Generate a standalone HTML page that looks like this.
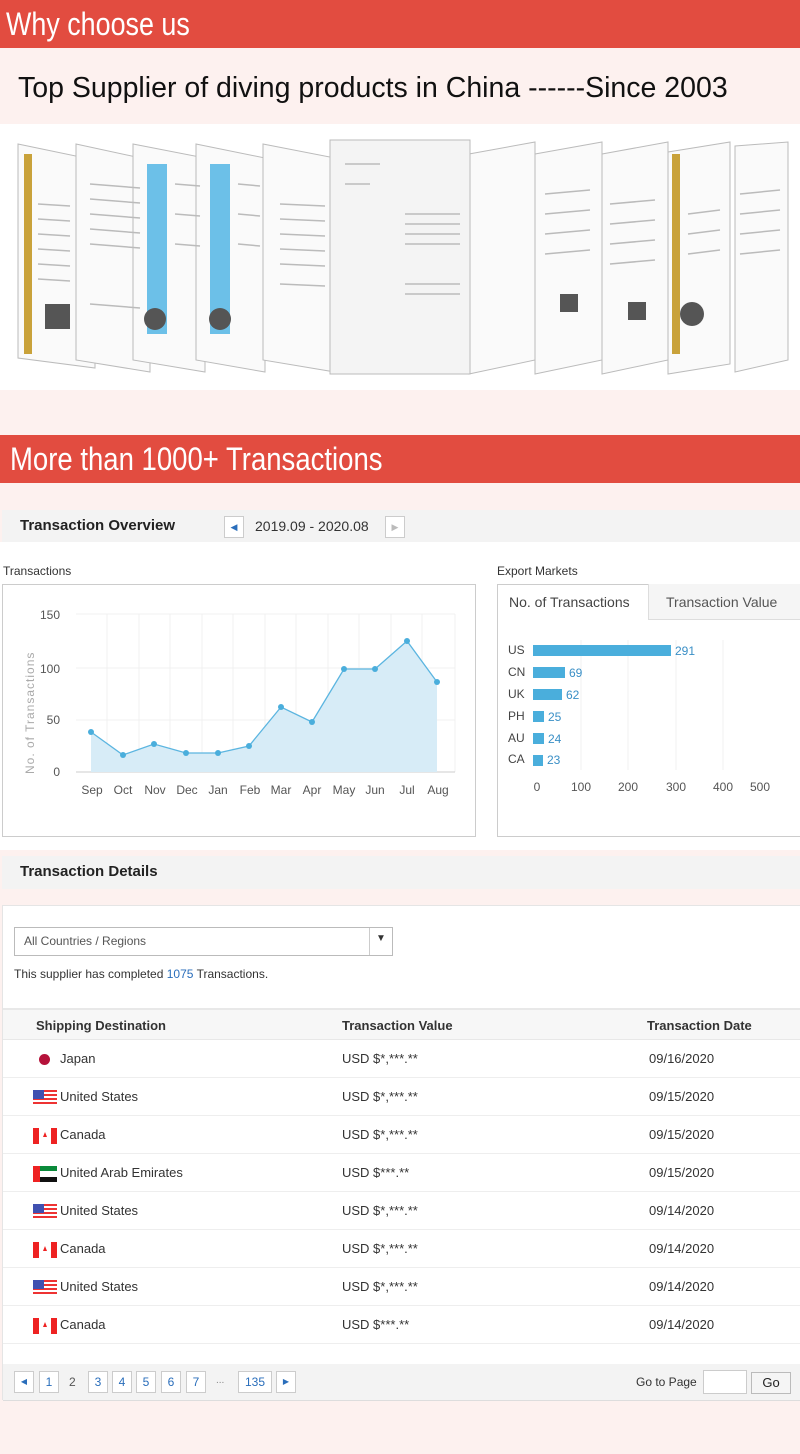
<!DOCTYPE html>
<html><head><meta charset="utf-8"><style>
*{margin:0;padding:0;box-sizing:border-box}
body{width:800px;height:1454px;background:#fdf1ef;font-family:"Liberation Sans",Arial,sans-serif;position:relative;overflow:hidden;color:#333}
.a{position:absolute}
.red{background:#e24c40;color:#fff;height:48px;width:800px}
.red div{position:absolute;top:4px;font-size:32px;line-height:40px;transform-origin:left center;white-space:nowrap}
.bx{border:1px solid #ccc;background:#fff}
.pg{position:absolute;top:1371px;height:22px;border:1px solid #ccc;background:#fff;color:#2a6ebb;font-size:12px;text-align:center;line-height:20px}
.row{position:absolute;left:3px;width:797px;height:38px;border-bottom:1px solid #eee;font-size:13px;color:#333}
.row span{position:absolute;top:11px}
.fl{position:absolute;left:30px;top:12px;width:24px;height:16px}
</style></head><body>
<div class="a red" style="top:0"><div style="left:6px;transform:scaleX(0.84)">Why choose us</div></div>
<div class="a" style="top:72px;left:18px;font-size:28.5px;color:#111">Top Supplier of diving products in China ------Since 2003</div>
<div class="a" style="top:124px;left:0;width:800px;height:266px;background:#fff"></div>
<svg class="a" style="top:124px;left:0" width="800" height="266">
<g stroke="#bbb" stroke-width="1" fill="#fafafa">
<polygon points="18,20 95,36 95,244 18,234"/>
<polygon points="76,20 150,36 150,248 76,236"/>
<polygon points="133,20 205,34 205,248 133,236"/>
<polygon points="196,20 265,34 265,248 196,236"/>
<polygon points="263,20 335,34 335,248 263,236"/>
<polygon points="735,22 788,18 788,236 735,248"/>
<polygon points="668,28 730,18 730,240 668,250"/>
<polygon points="602,30 668,18 668,236 602,250"/>
<polygon points="535,30 602,18 602,236 535,250"/>
<polygon points="469,30 535,18 535,236 469,250"/>
<polygon points="330,16 470,16 470,250 330,250" fill="#f4f4f4"/>
</g>
<rect x="147" y="40" width="20" height="170" fill="#6cc0e8"/>
<rect x="210" y="40" width="20" height="170" fill="#6cc0e8"/>
<g fill="#c9a23a"><rect x="24" y="30" width="8" height="200"/><rect x="672" y="30" width="8" height="200"/></g>
<g fill="#555"><rect x="45" y="180" width="25" height="25"/><rect x="560" y="170" width="18" height="18"/><rect x="628" y="178" width="18" height="18"/><circle cx="155" cy="195" r="11"/><circle cx="220" cy="195" r="11"/><circle cx="692" cy="190" r="12"/></g>
<g stroke="#bbb" stroke-width="1.5">
<line x1="38" y1="80" x2="70" y2="82"/><line x1="38" y1="95" x2="70" y2="97"/><line x1="38" y1="110" x2="70" y2="112"/><line x1="38" y1="125" x2="70" y2="127"/><line x1="38" y1="140" x2="70" y2="142"/><line x1="38" y1="155" x2="70" y2="157"/>
<line x1="90" y1="60" x2="140" y2="64"/><line x1="90" y1="75" x2="140" y2="79"/><line x1="90" y1="90" x2="140" y2="94"/><line x1="90" y1="105" x2="140" y2="109"/><line x1="90" y1="120" x2="140" y2="124"/><line x1="90" y1="180" x2="140" y2="184"/>
<line x1="175" y1="60" x2="200" y2="62"/><line x1="175" y1="90" x2="200" y2="92"/><line x1="175" y1="120" x2="200" y2="122"/><line x1="238" y1="60" x2="260" y2="62"/><line x1="238" y1="90" x2="260" y2="92"/><line x1="238" y1="120" x2="260" y2="122"/>
<line x1="280" y1="80" x2="325" y2="82"/><line x1="280" y1="95" x2="325" y2="97"/><line x1="280" y1="110" x2="325" y2="112"/><line x1="280" y1="125" x2="325" y2="127"/><line x1="280" y1="140" x2="325" y2="142"/><line x1="280" y1="160" x2="325" y2="162"/>
<line x1="405" y1="90" x2="460" y2="90"/><line x1="405" y1="100" x2="460" y2="100"/><line x1="405" y1="110" x2="460" y2="110"/><line x1="405" y1="120" x2="460" y2="120"/><line x1="405" y1="160" x2="460" y2="160"/><line x1="405" y1="170" x2="460" y2="170"/><line x1="345" y1="40" x2="380" y2="40"/><line x1="345" y1="60" x2="370" y2="60"/>
<line x1="545" y1="70" x2="590" y2="66"/><line x1="545" y1="90" x2="590" y2="86"/><line x1="545" y1="110" x2="590" y2="106"/><line x1="545" y1="130" x2="590" y2="126"/>
<line x1="610" y1="80" x2="655" y2="76"/><line x1="610" y1="100" x2="655" y2="96"/><line x1="610" y1="120" x2="655" y2="116"/><line x1="610" y1="140" x2="655" y2="136"/>
<line x1="688" y1="90" x2="720" y2="86"/><line x1="688" y1="110" x2="720" y2="106"/><line x1="688" y1="130" x2="720" y2="126"/>
<line x1="740" y1="70" x2="780" y2="66"/><line x1="740" y1="90" x2="780" y2="86"/><line x1="740" y1="110" x2="780" y2="106"/><line x1="740" y1="130" x2="780" y2="126"/></g>
</svg>
<div class="a red" style="top:435px"><div style="left:10px;transform:scaleX(0.86)">More than 1000+ Transactions</div></div>
<div class="a" style="top:510px;left:2px;width:798px;height:32px;background:#f3f3f3"></div>
<div class="a" style="top:517px;left:20px;font-size:15px;font-weight:bold;color:#222">Transaction Overview</div>
<div class="a" style="top:516px;left:224px;width:20px;height:22px;border:1px solid #ccc;background:#fff;color:#2a6ebb;font-size:9px;text-align:center;line-height:20px">◀</div>
<div class="a" style="top:518px;left:255px;font-size:14px;color:#333">2019.09 - 2020.08</div>
<div class="a" style="top:516px;left:385px;width:20px;height:22px;border:1px solid #ccc;background:#fff;color:#bbb;font-size:9px;text-align:center;line-height:20px">▶</div>
<div class="a" style="top:542px;left:0;width:800px;height:308px;background:#fff"></div>
<div class="a" style="top:564px;left:3px;font-size:12px">Transactions</div>
<div class="a" style="top:564px;left:497px;font-size:12px">Export Markets</div>
<div class="a bx" style="top:584px;left:2px;width:474px;height:253px"></div>
<div class="a bx" style="top:584px;left:497px;width:310px;height:253px"></div>
<svg class="a" style="top:584px;left:2px" width="474" height="253" font-family="Liberation Sans,sans-serif">
<g stroke="#f0f0f0"><line x1="74" y1="30" x2="453" y2="30"/><line x1="74" y1="84" x2="453" y2="84"/><line x1="74" y1="136" x2="453" y2="136"/>
<line x1="105" y1="30" x2="105" y2="188"/><line x1="137" y1="30" x2="137" y2="188"/><line x1="168" y1="30" x2="168" y2="188"/><line x1="200" y1="30" x2="200" y2="188"/><line x1="231" y1="30" x2="231" y2="188"/><line x1="263" y1="30" x2="263" y2="188"/><line x1="294" y1="30" x2="294" y2="188"/><line x1="326" y1="30" x2="326" y2="188"/><line x1="357" y1="30" x2="357" y2="188"/><line x1="389" y1="30" x2="389" y2="188"/><line x1="420" y1="30" x2="420" y2="188"/><line x1="453" y1="30" x2="453" y2="188"/></g>
<line x1="74" y1="188" x2="453" y2="188" stroke="#ccc"/>
<polygon fill="#d7ecf7" points="89,188 89,148 121,171 152,160 184,169 216,169 247,162 279,123 310,138 342,85 373,85 405,57 435,98 435,188"/>
<polyline fill="none" stroke="#5bb5e0" stroke-width="1.3" points="89,148 121,171 152,160 184,169 216,169 247,162 279,123 310,138 342,85 373,85 405,57 435,98"/>
<g fill="#4aaedc"><circle cx="89" cy="148" r="3"/><circle cx="121" cy="171" r="3"/><circle cx="152" cy="160" r="3"/><circle cx="184" cy="169" r="3"/><circle cx="216" cy="169" r="3"/><circle cx="247" cy="162" r="3"/><circle cx="279" cy="123" r="3"/><circle cx="310" cy="138" r="3"/><circle cx="342" cy="85" r="3"/><circle cx="373" cy="85" r="3"/><circle cx="405" cy="57" r="3"/><circle cx="435" cy="98" r="3"/></g>
<g font-size="12" fill="#555" text-anchor="end"><text x="58" y="35">150</text><text x="58" y="89">100</text><text x="58" y="140">50</text><text x="58" y="192">0</text></g>
<text transform="translate(32,190) rotate(-90)" font-size="12" fill="#aaa" letter-spacing="1">No. of Transactions</text>
<g font-size="12" fill="#555" text-anchor="middle"><text x="90" y="210">Sep</text><text x="121" y="210">Oct</text><text x="153" y="210">Nov</text><text x="185" y="210">Dec</text><text x="216" y="210">Jan</text><text x="248" y="210">Feb</text><text x="279" y="210">Mar</text><text x="310" y="210">Apr</text><text x="342" y="210">May</text><text x="373" y="210">Jun</text><text x="405" y="210">Jul</text><text x="436" y="210">Aug</text></g>
</svg>
<div class="a" style="top:584px;left:648px;width:152px;height:36px;background:#f5f5f5;border-left:1px solid #ddd;border-bottom:1px solid #ddd"></div>
<div class="a" style="top:594px;left:509px;font-size:14px;color:#444">No. of Transactions</div>
<div class="a" style="top:594px;left:666px;font-size:14px;color:#555">Transaction Value</div>
<svg class="a" style="top:620px;left:497px" width="303" height="216" font-family="Liberation Sans,sans-serif">
<g stroke="#f2f2f2"><line x1="84" y1="20" x2="84" y2="150"/><line x1="131" y1="20" x2="131" y2="150"/><line x1="179" y1="20" x2="179" y2="150"/><line x1="226" y1="20" x2="226" y2="150"/></g>
<g fill="#4aaedc"><rect x="36" y="25" width="138" height="11"/><rect x="36" y="47" width="32" height="11"/><rect x="36" y="69" width="29" height="11"/><rect x="36" y="91" width="11" height="11"/><rect x="36" y="113" width="11" height="11"/><rect x="36" y="135" width="10" height="11"/></g>
<g font-size="12" fill="#444"><text x="11" y="34">US</text><text x="11" y="56">CN</text><text x="11" y="78">UK</text><text x="11" y="100">PH</text><text x="11" y="122">AU</text><text x="11" y="143">CA</text></g>
<g font-size="12" fill="#3a8fc6"><text x="178" y="35">291</text><text x="72" y="57">69</text><text x="69" y="79">62</text><text x="51" y="101">25</text><text x="51" y="123">24</text><text x="50" y="144">23</text></g>
<g font-size="12" fill="#555" text-anchor="middle"><text x="40" y="171">0</text><text x="84" y="171">100</text><text x="131" y="171">200</text><text x="179" y="171">300</text><text x="226" y="171">400</text><text x="263" y="171">500</text></g>
</svg>
<div class="a" style="top:856px;left:2px;width:798px;height:33px;background:#f3f3f3"></div>
<div class="a" style="top:863px;left:20px;font-size:15px;font-weight:bold;color:#222">Transaction Details</div>
<div class="a" style="top:905px;left:2px;width:800px;height:495px;background:#fff;border:1px solid #e5e5e5"></div>
<div class="a" style="top:927px;left:14px;width:379px;height:29px;border:1px solid #bbb;background:#fff;font-size:12px;color:#555;line-height:27px;padding-left:9px">All Countries / Regions</div>
<div class="a" style="top:928px;left:369px;width:1px;height:27px;background:#ccc"></div>
<div class="a" style="top:933px;left:376px;font-size:10px;color:#333">▼</div>
<div class="a" style="top:967px;left:14px;font-size:12px;color:#333">This supplier has completed <span style="color:#2a6ebb">1075</span> Transactions.</div>
<div class="a" style="top:1008px;left:3px;width:797px;height:32px;background:#f7f7f7;border-top:2px solid #e8e8e8;border-bottom:1px solid #e8e8e8;font-size:13px;font-weight:bold;color:#333">
<span class="a" style="left:33px;top:8px">Shipping Destination</span><span class="a" style="left:339px;top:8px">Transaction Value</span><span class="a" style="left:644px;top:8px">Transaction Date</span></div>

<div class="row" style="top:1040px"><div class="a" style="left:36px;top:14px;width:11px;height:11px;border-radius:50%;background:#b5123a"></div><span style="left:57px">Japan</span><span style="left:339px">USD $*,***.**</span><span style="left:646px">09/16/2020</span></div>
<div class="row" style="top:1078px"><svg class="fl" viewBox="0 0 24 16"><rect width="24" height="16" fill="#e33"/><g fill="#fff"><rect y="2" width="24" height="2"/><rect y="6" width="24" height="2"/><rect y="10" width="24" height="2"/><rect y="14" width="24" height="2"/></g><rect width="11" height="9" fill="#4050b0"/></svg><span style="left:57px">United States</span><span style="left:339px">USD $*,***.**</span><span style="left:646px">09/15/2020</span></div>
<div class="row" style="top:1116px"><svg class="fl" viewBox="0 0 24 16"><rect width="24" height="16" fill="#e22"/><rect x="6" width="12" height="16" fill="#fff"/><path d="M12 4 L14 9 L10 9Z" fill="#e22"/></svg><span style="left:57px">Canada</span><span style="left:339px">USD $*,***.**</span><span style="left:646px">09/15/2020</span></div>
<div class="row" style="top:1154px"><svg class="fl" viewBox="0 0 24 16"><rect width="24" height="5" fill="#0a8a3a"/><rect y="5" width="24" height="6" fill="#fff"/><rect y="11" width="24" height="5" fill="#111"/><rect width="7" height="16" fill="#e22"/></svg><span style="left:57px">United Arab Emirates</span><span style="left:339px">USD $***.**</span><span style="left:646px">09/15/2020</span></div>
<div class="row" style="top:1192px"><svg class="fl" viewBox="0 0 24 16"><rect width="24" height="16" fill="#e33"/><g fill="#fff"><rect y="2" width="24" height="2"/><rect y="6" width="24" height="2"/><rect y="10" width="24" height="2"/><rect y="14" width="24" height="2"/></g><rect width="11" height="9" fill="#4050b0"/></svg><span style="left:57px">United States</span><span style="left:339px">USD $*,***.**</span><span style="left:646px">09/14/2020</span></div>
<div class="row" style="top:1230px"><svg class="fl" viewBox="0 0 24 16"><rect width="24" height="16" fill="#e22"/><rect x="6" width="12" height="16" fill="#fff"/><path d="M12 4 L14 9 L10 9Z" fill="#e22"/></svg><span style="left:57px">Canada</span><span style="left:339px">USD $*,***.**</span><span style="left:646px">09/14/2020</span></div>
<div class="row" style="top:1268px"><svg class="fl" viewBox="0 0 24 16"><rect width="24" height="16" fill="#e33"/><g fill="#fff"><rect y="2" width="24" height="2"/><rect y="6" width="24" height="2"/><rect y="10" width="24" height="2"/><rect y="14" width="24" height="2"/></g><rect width="11" height="9" fill="#4050b0"/></svg><span style="left:57px">United States</span><span style="left:339px">USD $*,***.**</span><span style="left:646px">09/14/2020</span></div>
<div class="row" style="top:1306px"><svg class="fl" viewBox="0 0 24 16"><rect width="24" height="16" fill="#e22"/><rect x="6" width="12" height="16" fill="#fff"/><path d="M12 4 L14 9 L10 9Z" fill="#e22"/></svg><span style="left:57px">Canada</span><span style="left:339px">USD $***.**</span><span style="left:646px">09/14/2020</span></div>

<div class="a" style="top:1364px;left:3px;width:797px;height:37px;background:#f3f3f3;border-bottom:1px solid #ddd"></div>
<div class="pg" style="left:14px;width:20px;font-size:8px">◀</div>
<div class="pg" style="left:39px;width:20px">1</div>
<div class="a" style="top:1375px;left:69px;font-size:12px;color:#555">2</div>
<div class="pg" style="left:88px;width:20px">3</div>
<div class="pg" style="left:112px;width:20px">4</div>
<div class="pg" style="left:136px;width:20px">5</div>
<div class="pg" style="left:161px;width:20px">6</div>
<div class="pg" style="left:186px;width:20px">7</div>
<div class="a" style="top:1375px;left:216px;font-size:10px;color:#888">...</div>
<div class="pg" style="left:238px;width:34px">135</div>
<div class="pg" style="left:276px;width:20px;font-size:8px">▶</div>
<div class="a" style="top:1375px;left:636px;font-size:12px;color:#333">Go to Page</div>
<div class="a" style="top:1370px;left:703px;width:44px;height:24px;border:1px solid #ccc;background:#fff"></div>
<div class="a" style="top:1372px;left:751px;width:40px;height:22px;border:1px solid #bbb;background:#f5f5f5;font-size:13px;text-align:center;line-height:20px;color:#222">Go</div>
</body></html>
